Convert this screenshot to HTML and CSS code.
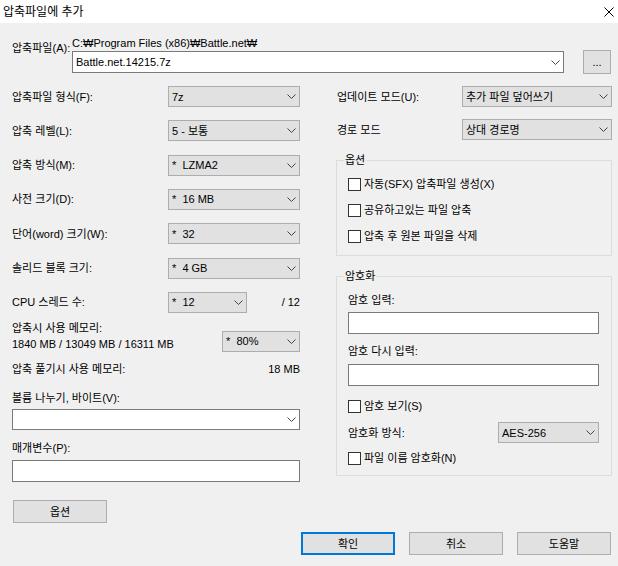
FILE: index.html
```html
<!DOCTYPE html>
<html lang="ko">
<head>
<meta charset="utf-8">
<title>압축파일에 추가</title>
<link rel="stylesheet" href="styles.css">
</head>
<body>
<div class="dialog">
  <div class="titlebar">
    <span class="title">압축파일에 추가</span>
    <svg class="close" width="10" height="10" viewBox="0 0 10 10"><path d="M0.5 0.5L9.5 9.5M9.5 0.5L0.5 9.5" stroke="#000" stroke-width="1" fill="none"/></svg>
  </div>
  <div class="content">
    <div class="archive">
      <div class="archive-label">압축파일(A):</div>
      <div class="archive-main">
        <div class="path">C:₩Program Files (x86)₩Battle.net₩</div>
        <div class="archive-row">
          <div class="combo edit grow"><span>Battle.net.14215.7z</span><svg class="chev" width="9" height="5" viewBox="0 0 9 5"><polyline points="0.5,0.5 4.5,4.5 8.5,0.5" fill="none" stroke="#444" stroke-width="1"/></svg></div>
          <button class="btn browse">...</button>
        </div>
      </div>
    </div>

    <div class="columns">
      <div class="left">
        <div class="field">
          <span>압축파일 형식(F):</span>
          <div class="combo w132"><span>7z</span><svg class="chev" width="9" height="5" viewBox="0 0 9 5"><polyline points="0.5,0.5 4.5,4.5 8.5,0.5" fill="none" stroke="#444" stroke-width="1"/></svg></div>
        </div>
        <div class="field">
          <span>압축 레벨(L):</span>
          <div class="combo w132"><span>5 - 보통</span><svg class="chev" width="9" height="5" viewBox="0 0 9 5"><polyline points="0.5,0.5 4.5,4.5 8.5,0.5" fill="none" stroke="#444" stroke-width="1"/></svg></div>
        </div>
        <div class="field">
          <span>압축 방식(M):</span>
          <div class="combo w132"><span>* &nbsp;LZMA2</span><svg class="chev" width="9" height="5" viewBox="0 0 9 5"><polyline points="0.5,0.5 4.5,4.5 8.5,0.5" fill="none" stroke="#444" stroke-width="1"/></svg></div>
        </div>
        <div class="field">
          <span>사전 크기(D):</span>
          <div class="combo w132"><span>* &nbsp;16 MB</span><svg class="chev" width="9" height="5" viewBox="0 0 9 5"><polyline points="0.5,0.5 4.5,4.5 8.5,0.5" fill="none" stroke="#444" stroke-width="1"/></svg></div>
        </div>
        <div class="field">
          <span>단어(word) 크기(W):</span>
          <div class="combo w132"><span>* &nbsp;32</span><svg class="chev" width="9" height="5" viewBox="0 0 9 5"><polyline points="0.5,0.5 4.5,4.5 8.5,0.5" fill="none" stroke="#444" stroke-width="1"/></svg></div>
        </div>
        <div class="field">
          <span>솔리드 블록 크기:</span>
          <div class="combo w132"><span>* &nbsp;4 GB</span><svg class="chev" width="9" height="5" viewBox="0 0 9 5"><polyline points="0.5,0.5 4.5,4.5 8.5,0.5" fill="none" stroke="#444" stroke-width="1"/></svg></div>
        </div>
        <div class="field">
          <span class="cpu-label">CPU 스레드 수:</span>
          <div class="combo w79"><span>* &nbsp;12</span><svg class="chev" width="9" height="5" viewBox="0 0 9 5"><polyline points="0.5,0.5 4.5,4.5 8.5,0.5" fill="none" stroke="#444" stroke-width="1"/></svg></div>
          <span class="grow right">/ 12</span>
        </div>
        <div class="memory">
          <div class="lines">
            <div>압축시 사용 메모리:</div>
            <div>1840 MB / 13049 MB / 16311 MB</div>
          </div>
          <div class="combo w78 mem-combo"><span>* &nbsp;80%</span><svg class="chev" width="9" height="5" viewBox="0 0 9 5"><polyline points="0.5,0.5 4.5,4.5 8.5,0.5" fill="none" stroke="#444" stroke-width="1"/></svg></div>
        </div>
        <div class="unpack">
          <span>압축 풀기시 사용 메모리:</span>
          <span>18 MB</span>
        </div>
        <div class="label volume-label">볼륨 나누기, 바이트(V):</div>
        <div class="combo edit volume"><span></span><svg class="chev" width="9" height="5" viewBox="0 0 9 5"><polyline points="0.5,0.5 4.5,4.5 8.5,0.5" fill="none" stroke="#444" stroke-width="1"/></svg></div>
        <div class="label params-label">매개변수(P):</div>
        <div class="textbox params"></div>
        <button class="btn options-btn">옵션</button>
      </div>

      <div class="right-col">
        <div class="field">
          <span class="rlabel">업데이트 모드(U):</span>
          <div class="combo w150"><span>추가 파일 덮어쓰기</span><svg class="chev" width="9" height="5" viewBox="0 0 9 5"><polyline points="0.5,0.5 4.5,4.5 8.5,0.5" fill="none" stroke="#444" stroke-width="1"/></svg></div>
        </div>
        <div class="field path-mode">
          <span class="rlabel">경로 모드</span>
          <div class="combo w150"><span>상대 경로명</span><svg class="chev" width="9" height="5" viewBox="0 0 9 5"><polyline points="0.5,0.5 4.5,4.5 8.5,0.5" fill="none" stroke="#444" stroke-width="1"/></svg></div>
        </div>

        <fieldset class="group options-group">
          <legend>옵션</legend>
          <label class="check"><input type="checkbox"><span>자동(SFX) 압축파일 생성(X)</span></label>
          <label class="check"><input type="checkbox"><span>공유하고있는 파일 압축</span></label>
          <label class="check"><input type="checkbox"><span>압축 후 원본 파일을 삭제</span></label>
        </fieldset>

        <fieldset class="group enc-group">
          <legend>암호화</legend>
          <div class="label pw-label">암호 입력:</div>
          <div class="textbox pw1"></div>
          <div class="label pw2-label">암호 다시 입력:</div>
          <div class="textbox pw2"></div>
          <label class="check show-pw"><input type="checkbox"><span>암호 보기(S)</span></label>
          <div class="field enc-method">
            <span>암호화 방식:</span>
            <div class="combo w101"><span>AES-256</span><svg class="chev" width="9" height="5" viewBox="0 0 9 5"><polyline points="0.5,0.5 4.5,4.5 8.5,0.5" fill="none" stroke="#444" stroke-width="1"/></svg></div>
          </div>
          <label class="check enc-names"><input type="checkbox"><span>파일 이름 암호화(N)</span></label>
        </fieldset>
      </div>
    </div>

    <div class="actions">
      <button class="btn action default">확인</button>
      <button class="btn action">취소</button>
      <button class="btn action">도움말</button>
    </div>
  </div>
</div>
</body>
</html>
```

FILE: styles.css
```css
* { box-sizing: border-box; }

html, body {
  margin: 0;
  padding: 0;
  background: #f0f0f0;
}

body {
  font-family: "Liberation Sans", "Noto Sans CJK KR", sans-serif;
  font-size: 11px;
  line-height: 16px;
  color: #000;
}

.dialog {
  width: 618px;
  height: 566px;
  background: #f0f0f0;
  overflow: hidden;
}

.titlebar {
  height: 23px;
  background: #fff;
  display: flex;
  align-items: center;
  justify-content: space-between;
  padding: 0 4px 0 3px;
}

.title {
  font-size: 12px;
  line-height: 16px;
}

.close { display: block; }

.content {
  padding: 0 6px 0 12px;
}

/* archive row */
.archive {
  display: flex;
  margin-top: 13px;
}

.archive-label {
  width: 60px;
  padding-top: 5px;
  line-height: 14px;
}

.archive-main {
  flex: 1;
  display: flex;
  flex-direction: column;
}

.path {
  line-height: 14px;
  height: 14px;
}

.archive-row {
  display: flex;
  align-items: center;
  height: 24px;
}

.grow { flex: 1; }
.right { text-align: right; }

.cpu-label {
  width: 156px;
  flex: none;
}

/* combos */
.combo {
  display: flex;
  align-items: center;
  height: 21px;
  border: 1px solid #adadad;
  background: #e1e1e1;
  padding: 0 3px 0 3px;
  white-space: nowrap;
}

.combo span { flex: 1; }

.combo.edit {
  background: #fff;
  border-color: #7a7a7a;
}

.archive-row .combo { height: 22px; }

.chev { display: block; flex: none; }

.w132 { width: 132px; }
.w79 { width: 79px; }
.w78 { width: 78px; }
.w150 { width: 150px; }
.w101 { width: 101px; }

.btn {
  font-family: inherit;
  font-size: 11px;
  color: #000;
  background: #e1e1e1;
  border: 1px solid #adadad;
  padding: 0;
  margin: 0;
}

.browse {
  width: 28px;
  height: 24px;
  margin-left: 19px;
  margin-right: 1px;
  line-height: 14px;
}

/* columns */
.columns {
  display: grid;
  grid-template-columns: 288px 276px;
  column-gap: 36px;
  align-items: start;
  margin-top: 12px;
}

.left, .right-col {
  display: flex;
  flex-direction: column;
}

.field {
  display: flex;
  align-items: center;
  justify-content: space-between;
  height: 21px;
}

.left .field + .field { margin-top: 13.33px; }

.memory {
  display: flex;
  justify-content: space-between;
  margin-top: 7px;
}

.mem-combo { margin-top: 11px; }

.unpack {
  display: flex;
  justify-content: space-between;
  margin-top: 9px;
}

.volume-label { margin-top: 13px; }

.volume {
  margin-top: 3px;
  width: 288px;
}

.params-label { margin-top: 10px; }

.textbox {
  height: 22px;
  background: #fff;
  border: 1px solid #7a7a7a;
}

.params {
  margin-top: 4px;
  width: 288px;
}

.options-btn {
  margin-top: 18px;
  margin-left: 1px;
  width: 94px;
  height: 23px;
}

/* right column */
.rlabel { padding-left: 1px; }

.path-mode { margin-top: 12px; }

.group {
  margin: 0;
  border: 1px solid #dcdcdc;
  min-width: 0;
}

.group legend {
  padding: 0 1px;
  margin-left: -4px;
  line-height: 16px;
}

.options-group {
  margin-top: 12px;
  padding: 6px 12px 9px 11px;
}

.check {
  display: flex;
  align-items: center;
  height: 20px;
}

.options-group .check + .check { margin-top: 6px; }

.check input {
  -webkit-appearance: none;
  appearance: none;
  width: 13px;
  height: 13px;
  margin: 0 3px 0 0;
  border: 1px solid #333;
  background: #fff;
  flex: none;
}

.enc-group {
  margin-top: 12px;
  padding: 8px 12px 7px 11px;
}

.pw1 { margin-top: 4px; }
.pw2-label { margin-top: 9px; }
.pw2 { margin-top: 5px; }
.show-pw { margin-top: 10px; }
.enc-method { margin-top: 6px; }
.enc-names { margin-top: 5px; }

/* bottom buttons */
.actions {
  display: flex;
  justify-content: flex-end;
  gap: 14px;
  margin-top: 9px;
  margin-right: 1px;
}

.action {
  width: 94px;
  height: 23px;
}

.action.default {
  border: 2px solid #0078d7;
}
```
